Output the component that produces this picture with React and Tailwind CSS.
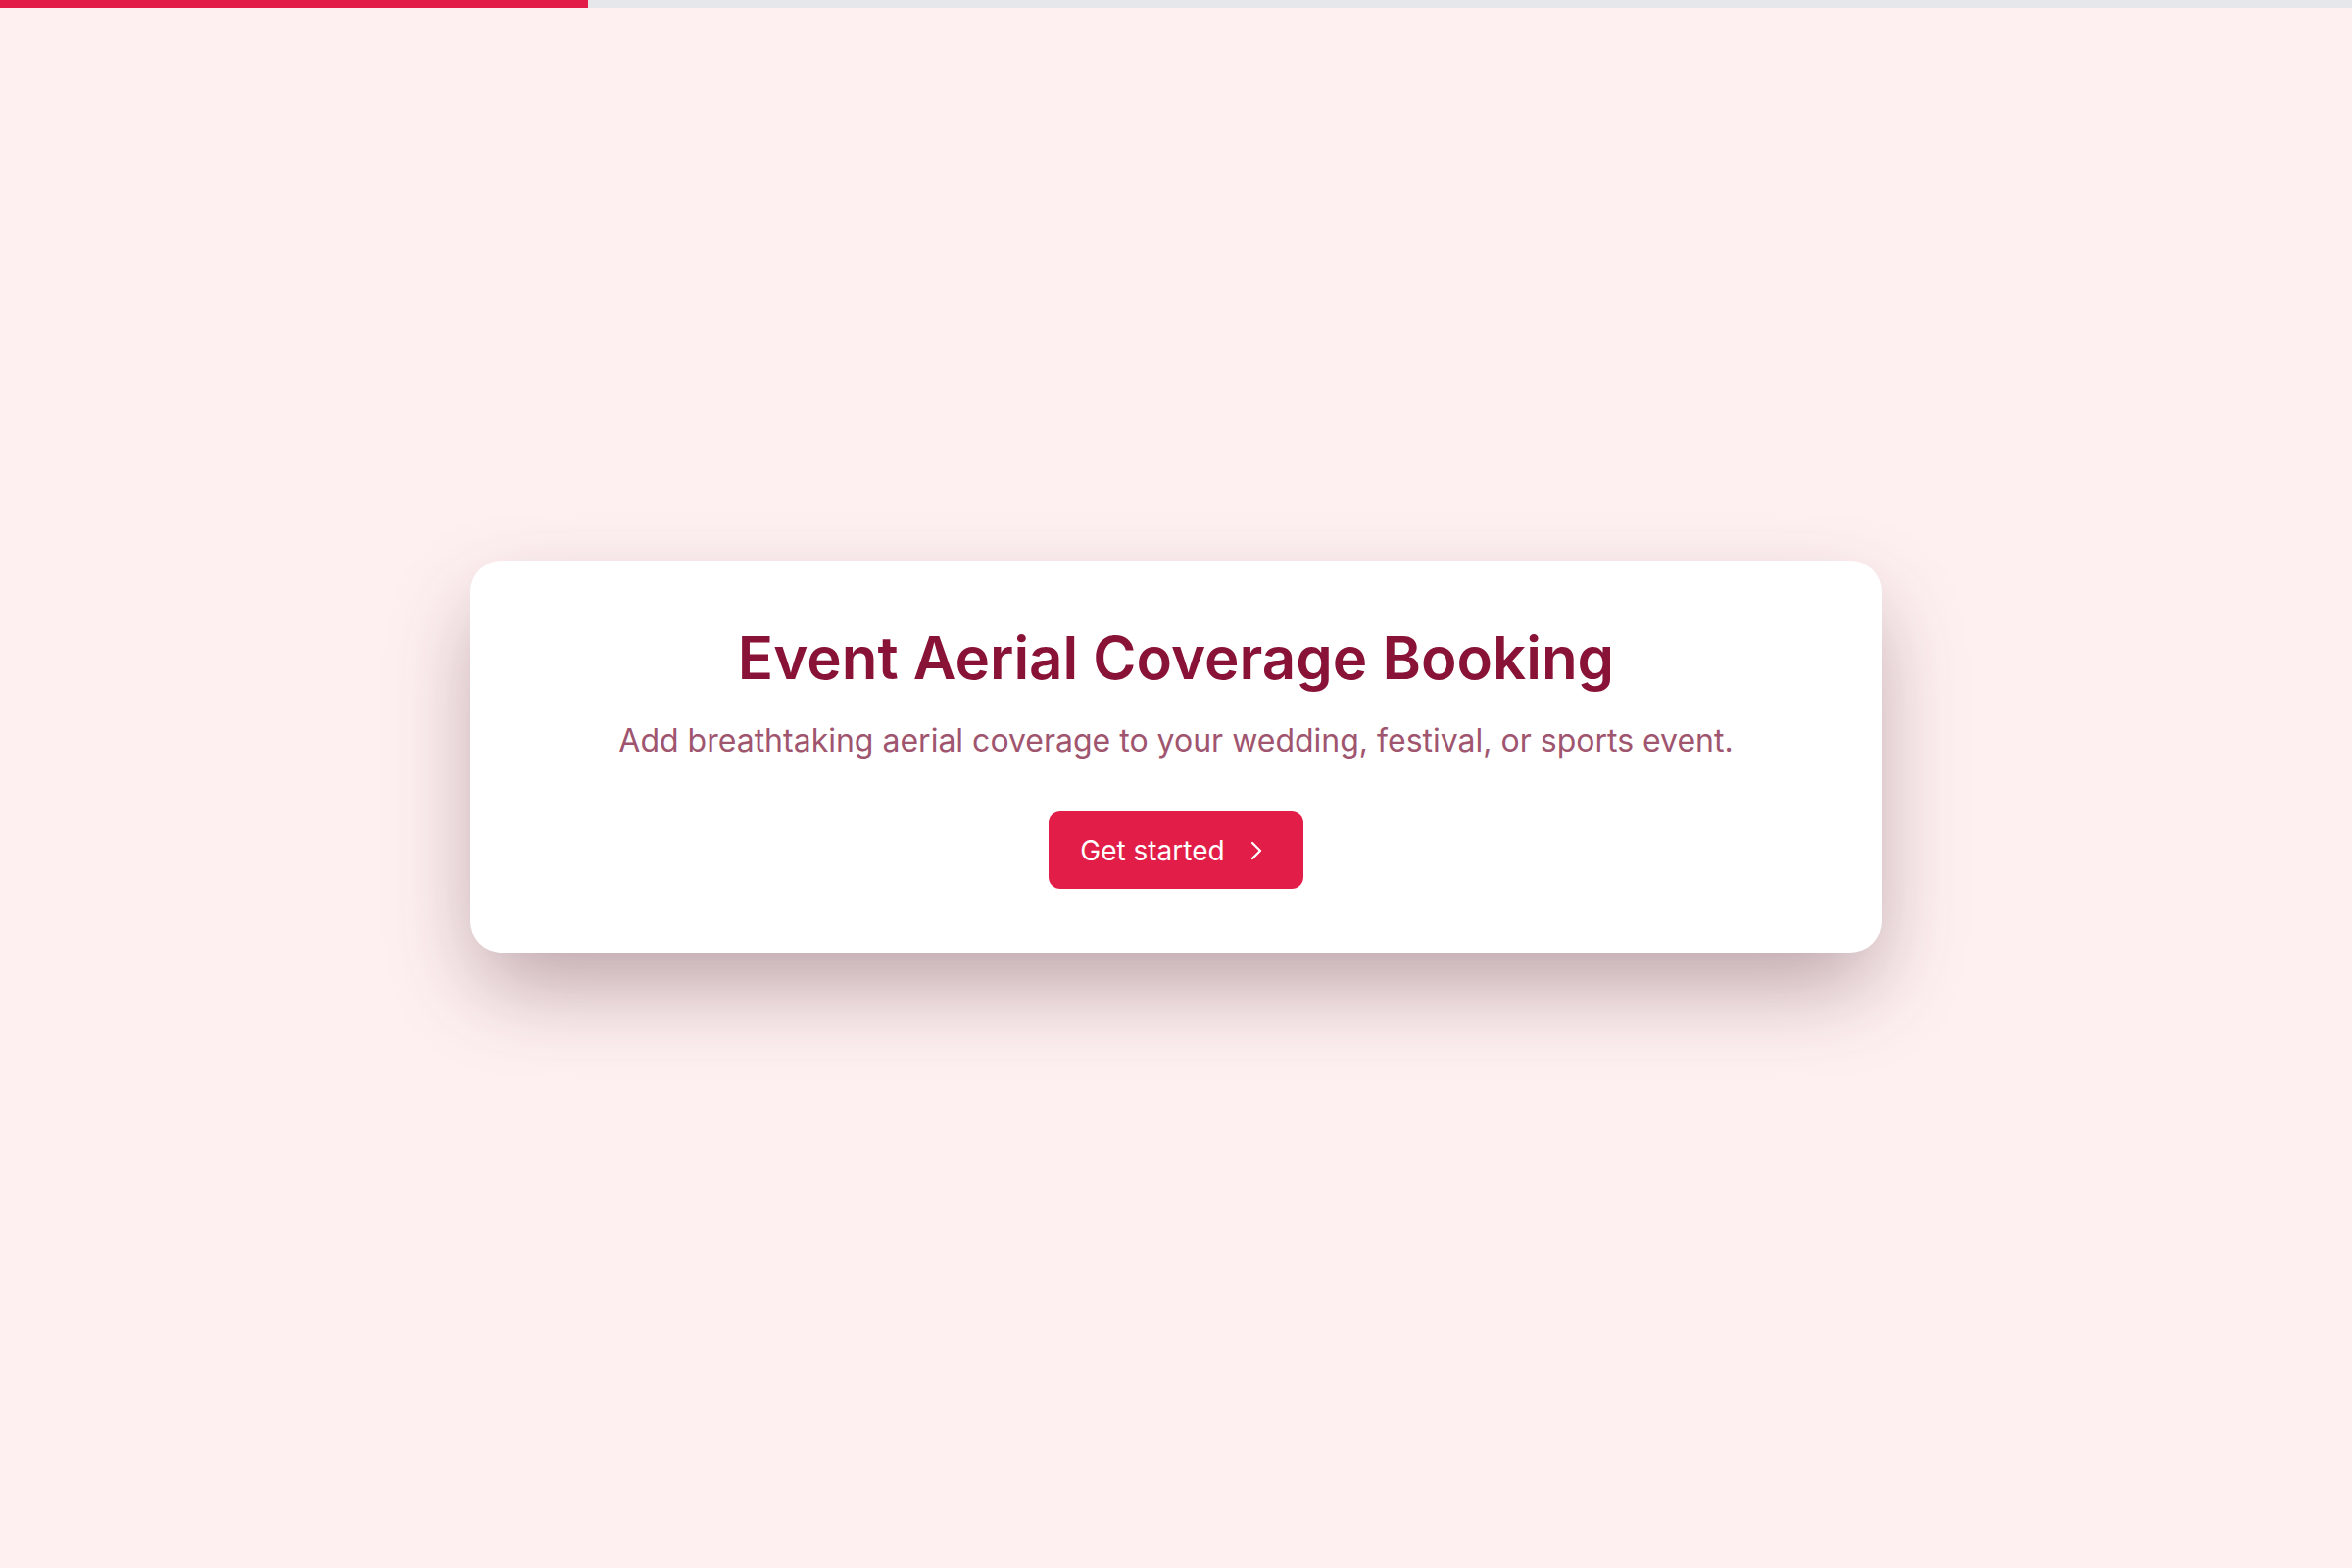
import React from "react";

function ChevronRight() {
  return (
    <svg width="32" height="32" viewBox="0 0 24 24" fill="none" stroke="currentColor" strokeWidth="1.75" strokeLinecap="round" strokeLinejoin="round">
      <path d="m9 18 6-6-6-6" />
    </svg>
  );
}

export default function App() {
  return (
    <div className="min-h-screen flex flex-col bg-[#fef0f1]" style={{ fontFamily: "Inter, 'Noto Sans', sans-serif" }}>
      <div className="h-2 w-full bg-[#e5e7eb] flex">
        <div className="h-full w-1/4 bg-[#e11d48]" />
      </div>
      <main className="flex-1 flex items-center justify-center pb-16 px-4">
        <div className="w-full max-w-[1440px] bg-white rounded-[32px] shadow-[0_40px_90px_-10px_rgba(70,30,40,0.38)] px-16 pt-16 pb-[65px] flex flex-col items-center text-center">
          <h1 className="text-[60px] leading-[70px] font-semibold text-[#881337]">
            Event Aerial Coverage Booking
          </h1>
          <p className="mt-8 text-[32px] leading-[36px] text-[#a0556f]">
            Add breathtaking aerial coverage to your wedding, festival, or sports event.
          </p>
          <button className="mt-[54px] h-[79px] pl-8 pr-8 rounded-xl bg-[#e11d48] text-white text-[28px] leading-[36px] flex items-center gap-4">
            <span>Get started</span>
            <ChevronRight />
          </button>
        </div>
      </main>
    </div>
  );
}
